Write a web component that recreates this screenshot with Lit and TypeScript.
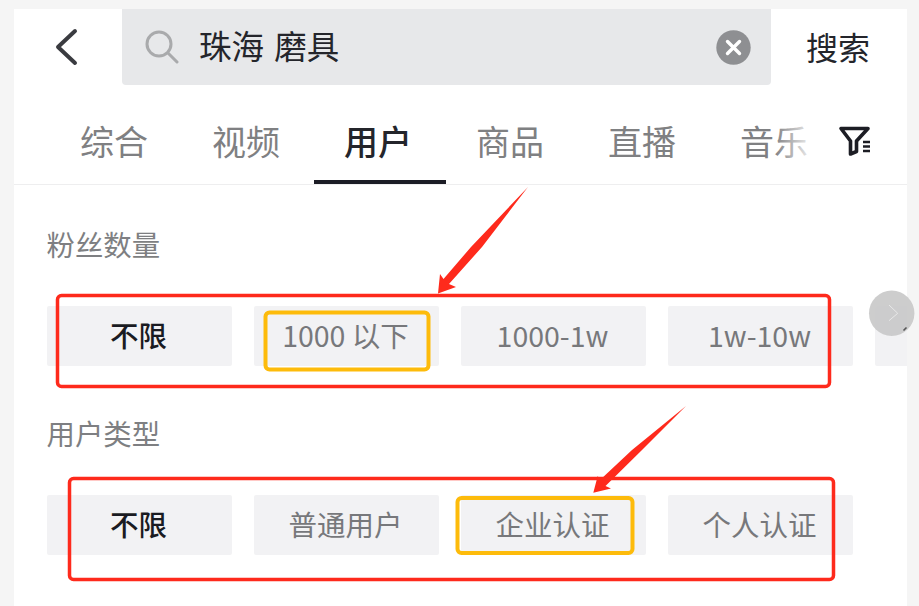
import { LitElement, html, css, svg } from "lit";
import { customElement } from "lit/decorators.js";

const TABS = ["综合", "视频", "用户", "商品", "直播", "音乐"];
const FANS = ["不限", "1000 以下", "1000-1w", "1w-10w", ""];
const TYPES = ["不限", "普通用户", "企业认证", "个人认证"];

@customElement("app-root")
export class AppRoot extends LitElement {
  static styles = css`
    :host {
      display: block;
      position: relative;
      width: 919px;
      height: 606px;
      overflow: hidden;
      box-sizing: border-box;
      padding: 9px 12px 0 14px;
      background: #f5f5f5;
      font-family: "Noto Sans CJK SC", "Noto Sans", sans-serif;
    }
    .panel { height: 597px; background: #fff; overflow: hidden; }
    .top { display: flex; height: 76px; }
    .back { width: 108px; display: flex; align-items: center; padding-left: 40px; box-sizing: border-box; }
    .search {
      flex: 1; display: flex; align-items: center; background: #e7e8ea;
      border-radius: 0 0 4px 4px; padding: 0 20px 0 23px;
    }
    .query { flex: 1; margin: -4px 0 0 20px; font-size: 32.5px; line-height: 1; color: #24252b; word-spacing: 3px; }
    .go { width: 134px; padding-right: 2px; text-align: center; font-size: 32px; line-height: 74px; color: #24252b; }
    .tabs { position: relative; display: flex; height: 99px; padding-left: 34px; border-bottom: 1px solid #eeeeef; }
    .tab {
      position: relative; width: 132px; height: 99px; text-align: center;
      font-size: 34px; line-height: 112px; color: #7f8082;
    }
    .tab.on { color: #24252b; font-weight: 500; }
    .tab.on::after {
      content: ""; position: absolute; left: 2px; bottom: 0; width: 132px; height: 4px; background: #1c1d26;
    }
    .fade {
      position: absolute; left: 760px; top: 20px; width: 50px; height: 70px;
      background: linear-gradient(90deg, rgba(255,255,255,0), #fff 85%);
    }
    .filter { position: absolute; left: 824px; top: 40px; }
    .label { font-size: 28.4px; line-height: 40px; color: #7e7f82; padding-left: 32.5px; }
    .l1 { margin-top: 39px; }
    .l2 { margin-top: 47.5px; }
    .chips { display: flex; gap: 22px; padding-left: 33px; overflow: hidden; margin-top: 42px; }
    .l2 + .chips { margin-top: 42px; }
    .chip {
      flex: 0 0 185px; height: 59.5px; box-sizing: border-box; padding: 0 2px 3px 0; background: #f2f2f4; border-radius: 2px;
      display: flex; align-items: center; justify-content: center;
      font-size: 28.5px; color: #77787b; white-space: nowrap;
    }
    .chip.on { color: #1a1b22; font-weight: 500; }
    .overlay { position: absolute; left: 0; top: 0; pointer-events: none; }
  `;

  private chips(items: string[]) {
    return html`<div class="chips">
      ${items.map((t, i) => html`<div class="chip ${i === 0 ? "on" : ""}">${t}</div>`)}
    </div>`;
  }

  render() {
    return html`
      <div class="panel">
        <div class="top">
          <div class="back">
            <svg width="24" height="38" viewBox="0 0 24 38" fill="none">
              <path d="M21 3 L4 19 L21 35" stroke="#3a3b40" stroke-width="4" stroke-linecap="round" stroke-linejoin="round"/>
            </svg>
          </div>
          <div class="search">
            <svg width="34" height="34" viewBox="0 0 34 34" fill="none">
              <circle cx="14" cy="14" r="12" stroke="#a9aaac" stroke-width="3"/>
              <path d="M23 23 L32 32" stroke="#a9aaac" stroke-width="3" stroke-linecap="round"/>
            </svg>
            <div class="query">珠海 磨具</div>
            <svg width="35" height="35" viewBox="0 0 35 35">
              <circle cx="17.5" cy="17.5" r="17.2" fill="#8e8f92"/>
              <path d="M11.5 11.5 L23.5 23.5 M23.5 11.5 L11.5 23.5" stroke="#fff" stroke-width="3.4" stroke-linecap="round"/>
            </svg>
          </div>
          <div class="go">搜索</div>
        </div>
        <div class="tabs">
          ${TABS.map((t, i) => html`<div class="tab ${i === 2 ? "on" : ""}">${t}</div>`)}
          <div class="fade"></div>
          <svg class="filter" width="34" height="34" viewBox="0 0 34 34" fill="none">
            <path d="M3 3.5 H30 L18.5 16 V26.5 L12.5 29 V16 Z" stroke="#1c1d24" stroke-width="3.6" stroke-linejoin="round"/>
            <path d="M25 17 H32 M25 21.5 H32 M25 26 H32" stroke="#1c1d24" stroke-width="2.6"/>
          </svg>
        </div>
        <div class="label l1">粉丝数量</div>
        ${this.chips(FANS)}
        <div class="label l2">用户类型</div>
        ${this.chips(TYPES)}
      </div>
      <svg class="overlay" width="919" height="606" viewBox="0 0 919 606" fill="none">
        ${svg`
          <circle cx="891.7" cy="313.3" r="22.7" fill="#c9c9c9" fill-opacity=".92"/>
          <path d="M889 305 L897.7 313.3 L889 320.7" stroke="#e8e8e8" stroke-width="1"/>
          <path d="M903.5 330.5 L906.5 327.5" stroke="#555" stroke-width="1.6"/>
          <rect x="57.5" y="295.5" width="772" height="91" rx="4" stroke="#fe2a1c" stroke-width="3.5"/>
          <rect x="69.5" y="478.5" width="764" height="101" rx="4" stroke="#fe2a1c" stroke-width="3.5"/>
          <rect x="265.5" y="312.5" width="163" height="57" rx="4" stroke="#fdbb0b" stroke-width="4"/>
          <rect x="457.5" y="498" width="175" height="55" rx="4" stroke="#fdbb0b" stroke-width="4"/>
          <polygon points="528,187 482,247 449,284 456,287 438,293.5 440,274 443.5,279 471,247" fill="#fe2a1c"/>
          <polygon points="686,406 642,450 605.5,486 611,488.5 593.3,492.7 597.7,476 600,480 632,450" fill="#fe2a1c"/>
        `}
      </svg>
    `;
  }
}
